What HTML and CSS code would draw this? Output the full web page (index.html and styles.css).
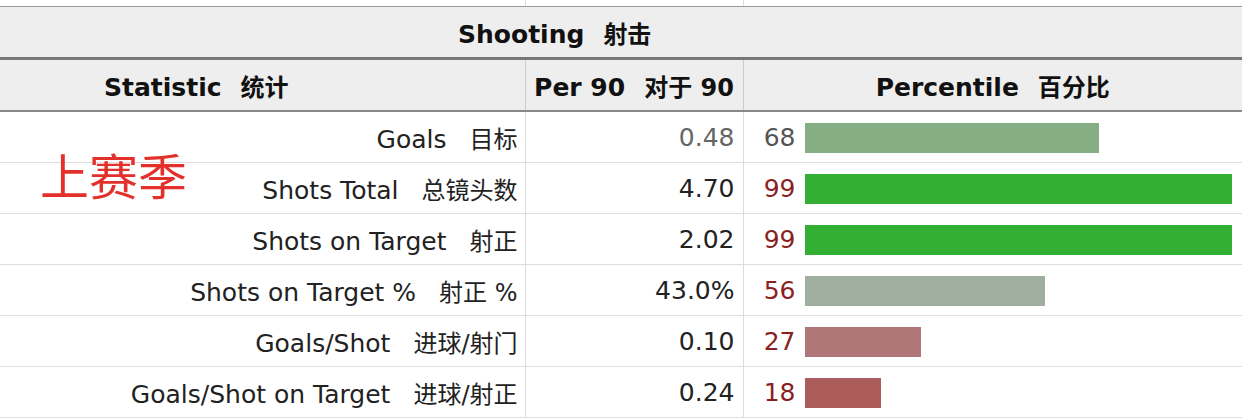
FILE: index.html
```html
<!DOCTYPE html>
<html lang="en">
<head>
<meta charset="utf-8">
<title>Shooting</title>
<link rel="stylesheet" href="styles.css">
</head>
<body>
<div class="wrap">
  <table class="stats">
    <colgroup>
      <col class="c1"><col class="c2"><col class="c3">
    </colgroup>
    <thead>
      <tr class="prev"><td></td><td></td><td></td></tr>
      <tr class="over">
        <th colspan="3">Shooting<span class="zh">射击</span></th>
      </tr>
      <tr class="cols">
        <th>Statistic<span class="zh">统计</span></th>
        <th>Per 90<span class="zh">对于 90</span></th>
        <th>Percentile<span class="zh">百分比</span></th>
      </tr>
    </thead>
    <tbody>
      <tr>
        <td class="stat">Goals<span class="zh">目标</span></td>
        <td class="val muted">0.48</td>
        <td class="pct"><span class="num muted">68</span><span class="bar" style="width:294px;background:#85ae85"></span></td>
      </tr>
      <tr>
        <td class="stat">Shots Total<span class="zh">总镜头数</span></td>
        <td class="val">4.70</td>
        <td class="pct"><span class="num">99</span><span class="bar" style="width:427px;background:#33b034"></span></td>
      </tr>
      <tr>
        <td class="stat">Shots on Target<span class="zh">射正</span></td>
        <td class="val">2.02</td>
        <td class="pct"><span class="num">99</span><span class="bar" style="width:427px;background:#33b034"></span></td>
      </tr>
      <tr>
        <td class="stat">Shots on Target %<span class="zh">射正 %</span></td>
        <td class="val">43.0%</td>
        <td class="pct"><span class="num">56</span><span class="bar" style="width:240px;background:#9fae9f"></span></td>
      </tr>
      <tr>
        <td class="stat">Goals/Shot<span class="zh">进球/射门</span></td>
        <td class="val">0.10</td>
        <td class="pct"><span class="num">27</span><span class="bar" style="width:116px;background:#af7777"></span></td>
      </tr>
      <tr>
        <td class="stat">Goals/Shot on Target<span class="zh">进球/射正</span></td>
        <td class="val">0.24</td>
        <td class="pct"><span class="num">18</span><span class="bar" style="width:76px;background:#ad5c5c"></span></td>
      </tr>
    </tbody>
  </table>
  <div class="note">上赛季</div>
</div>
</body>
</html>
```
FILE: styles.css
```css
html, body {
  margin: 0;
  padding: 0;
  background: #fff;
}
body {
  font-family: "DejaVu Sans", "Noto Sans CJK SC", sans-serif;
  color: #222;
  overflow: hidden;
}
.wrap {
  position: relative;
  width: 1242px;
}
.stats {
  width: 1242px;
  border-collapse: collapse;
  table-layout: fixed;
  font-size: 25px;
}
.c1 { width: 525px; }
.c2 { width: 218px; }
.c3 { width: 499px; }

.stats td, .stats th {
  padding: 0;
  white-space: nowrap;
}
.prev td {
  height: 6px;
  border-right: 1px solid #ddd;
  border-bottom: 1px solid #999;
}
.prev td:last-child { border-right: none; }

.over th {
  height: 50px;
  background: #eeeeee;
  color: #111;
  font-weight: bold;
  font-size: 25px;
  text-align: left;
  padding-left: 458px;
  border-bottom: 3px solid #777;
}
.cols th {
  height: 50px;
  background: #eeeeee;
  color: #111;
  font-weight: bold;
  font-size: 25px;
  text-align: center;
  border-right: 1px solid #ccc;
  border-bottom: 2px solid #888;
}
.cols th:first-child { padding-left: 104px; text-align: left; }
.cols th:last-child { border-right: none; }

.zh {
  font-size: 24px;
  margin-left: 23px;
}
th .zh { margin-left: 19px; }

tbody td {
  height: 50px;
  border-bottom: 1px solid #ddd;
  border-right: 1px solid #ddd;
}
tbody td:last-child { border-right: none; }

.stat {
  text-align: right;
  padding-right: 7px !important;
}
.val {
  text-align: right;
  padding-right: 8px !important;
}
.muted { color: #666; }

.pct {
  padding-left: 8px !important;
}
.pct .num {
  display: inline-block;
  width: 44px;
  text-align: right;
  color: #8a1f1f;
  vertical-align: middle;
}
.pct .num.muted { color: #555; }
.bar {
  display: inline-block;
  height: 30px;
  margin-left: 9px;
  vertical-align: middle;
}

.note {
  position: absolute;
  left: 40px;
  top: 149px;
  font-family: "Noto Sans CJK SC", sans-serif;
  font-size: 49px;
  line-height: 49px;
  color: #e3302a;
}
```
